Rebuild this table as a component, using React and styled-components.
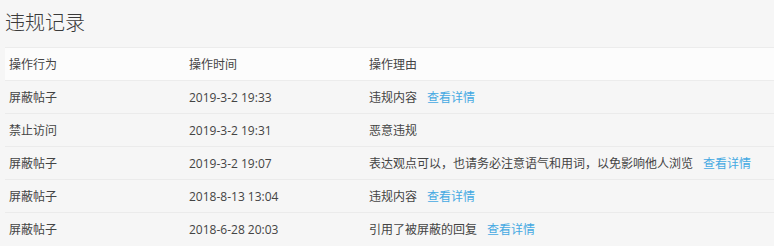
import styled, { createGlobalStyle } from "styled-components"

const records = [
    { action: "屏蔽帖子", time: "2019-3-2 19:33", reason: "违规内容", link: true },
    { action: "禁止访问", time: "2019-3-2 19:31", reason: "恶意违规", link: false },
    { action: "屏蔽帖子", time: "2019-3-2 19:07", reason: "表达观点可以，也请务必注意语气和用词，以免影响他人浏览", link: true },
    { action: "屏蔽帖子", time: "2018-8-13 13:04", reason: "违规内容", link: true },
    { action: "屏蔽帖子", time: "2018-6-28 20:03", reason: "引用了被屏蔽的回复", link: true },
]

export default function App(){
    return (
        <>
            <GlobalStyle />
            <Page>
                <Title>违规记录</Title>
                <Table>
                    <HeadRow>
                        <Cell>操作行为</Cell>
                        <Cell>操作时间</Cell>
                        <Cell>操作理由</Cell>
                    </HeadRow>
                    {records.map((r, i) => (
                        <Row key={i} last={i === records.length - 1}>
                            <Cell>{r.action}</Cell>
                            <Cell>{r.time}</Cell>
                            <Cell>
                                {r.reason}
                                {r.link && <Detail href="#">查看详情</Detail>}
                            </Cell>
                        </Row>
                    ))}
                </Table>
            </Page>
        </>
    )
}

const GlobalStyle = createGlobalStyle`
    body{
        margin: 0;
        background: #f6f6f6;
        font-family: "Open Sans", "Noto Sans CJK SC", sans-serif;
        color: #333;
    }
`

const Page = styled.div`
    width: 774px;
    height: 246px;
    padding-left: 5px;
    box-sizing: border-box;
    overflow: hidden;
`

const Title = styled.h2`
    margin: 0;
    padding-top: 9px;
    height: 47px;
    box-sizing: border-box;
    font-size: 20px;
    font-weight: 300;
    line-height: 28px;
    color: #3a3a3a;
`

const Table = styled.div`
    display: flex;
    flex-direction: column;
`

const Row = styled.div`
    display: grid;
    grid-template-columns: 180px 180px 1fr;
    align-items: center;
    height: 33px;
    box-sizing: border-box;
    border-bottom: 1px solid ${p => p.last ? "transparent" : "#ebebeb"};
    font-size: 12px;
`

const HeadRow = styled(Row)`
    height: 34px;
    background: #fcfcfc;
    border-top: 1px solid #ececec;
    border-bottom: 1px solid #ececec;
`

const Cell = styled.div`
    padding-left: 4px;
    white-space: nowrap;
    color: #444;
`

const Detail = styled.a`
    margin-left: 10px;
    color: #45a9e2;
    text-decoration: none;
`
